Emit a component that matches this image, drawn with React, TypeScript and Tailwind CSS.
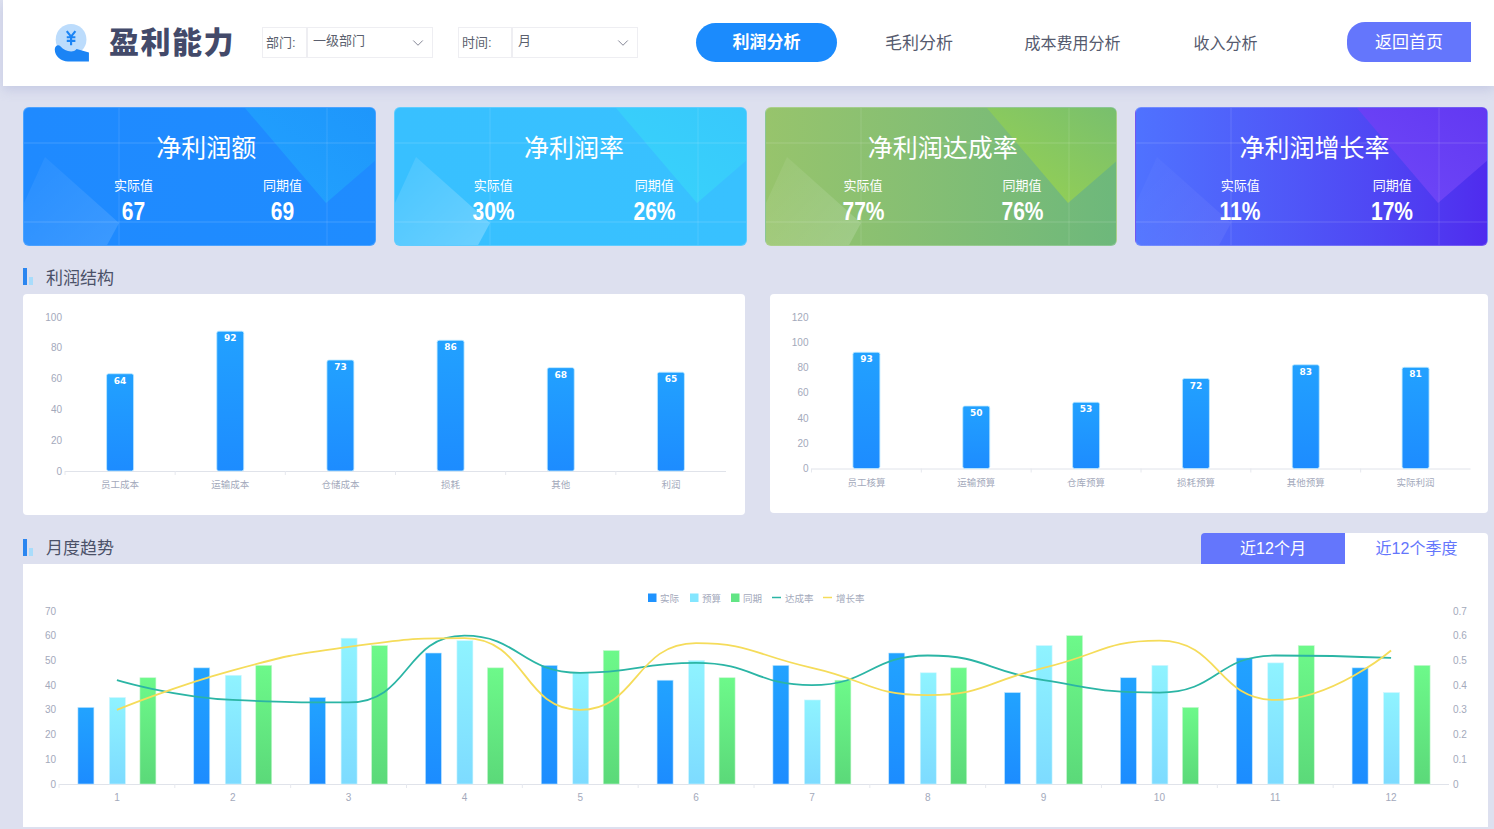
import { ChevronDown } from "lucide-react"

const cards = [
  {
    title: "净利润额", actual: "67", last: "69",
    bg: "bg-gradient-to-r from-[#1f8aff] to-[#1f8cff]", grid: "pl-[35px] grid-cols-[149px_149px]", titlePad: "pl-[14px]",
    tri: "#22a3ff", triEnd: "#1e96fb", shade: 0.1, id: "a",
  },
  {
    title: "净利润率", actual: "30%", last: "26%",
    bg: "bg-gradient-to-r from-[#38c0ff] to-[#38c1ff]", grid: "pl-[18px] grid-cols-[161px_161px]", titlePad: "pl-[8px]",
    tri: "#38d4fa", triEnd: "#38c8fc", shade: 0.2, id: "b",
  },
  {
    title: "净利润达成率", actual: "77%", last: "76%",
    bg: "bg-gradient-to-r from-[#97c46c] to-[#6db87b]", grid: "pl-[18px] grid-cols-[159px_159px]", titlePad: "pl-[4px]",
    tri: "#9ad34f", triEnd: "#78bf6e", shade: 0.13, id: "c",
  },
  {
    title: "净利润增长率", actual: "11%", last: "17%",
    bg: "bg-gradient-to-r from-[#4f72ff] to-[#4f2bee]", grid: "pl-[28px] grid-cols-[152px_152px]", titlePad: "pl-[6px]",
    tri: "#7049f8", triEnd: "#6238f2", shade: 0.05, id: "d",
  },
]

function StatValue({ text }: { text: string }) {
  return (
    <div className="mt-[2px] scale-x-[0.84] text-[25px] font-bold leading-[28px]">{text}</div>
  )
}

function StatCard({ card }: { card: (typeof cards)[number] }) {
  return (
    <div className={`relative h-[139px] overflow-hidden rounded-[6px] border border-white/20 text-white ${card.bg}`}>
      <svg className="absolute inset-0" width="353" height="139">
        <defs>
          <linearGradient id={`tri-${card.id}`} x1="0" y1="1" x2="1" y2="0">
            <stop offset="0" stopColor={card.tri} />
            <stop offset="1" stopColor={card.triEnd} />
          </linearGradient>
          <linearGradient id={`pale-${card.id}`} x1="0" y1="0" x2="1" y2="1">
            <stop offset="0" stopColor="#fff" stopOpacity={card.shade * 0.4} />
            <stop offset="1" stopColor="#fff" stopOpacity={card.shade * 1.3} />
          </linearGradient>
        </defs>
        <polygon points="221,0 353,0 353,51 302,95" fill={`url(#tri-${card.id})`} />
        <polygon points="0,95 21,49 95,115 82,139 0,139" fill={`url(#pale-${card.id})`} />
        <path d="M95 0V139M303 0V139" stroke="#fff" strokeOpacity="0.12" />
        <path d="M0 35H353M0 114H353" stroke="#fff" strokeOpacity="0.16" />
      </svg>
      <div className="relative pt-[23px]">
        <div className={`text-center text-[25px] leading-[34px] ${card.titlePad}`}>{card.title}</div>
        <div className={`mt-[12px] grid text-center ${card.grid}`}>
          <div>
            <div className="text-[13px] leading-[18px]">实际值</div>
            <StatValue text={card.actual} />
          </div>
          <div>
            <div className="text-[13px] leading-[18px]">同期值</div>
            <StatValue text={card.last} />
          </div>
        </div>
      </div>
    </div>
  )
}

function Filter({ label, value, labelW }: { label: string; value: string; labelW: string }) {
  return (
    <div className="flex h-[31px] border border-[#eeeef2] text-[13px] text-[#5b5f6e]">
      <div className={`flex items-center border-r-2 border-[#eeeef2] pl-[3px] ${labelW}`}>{label}</div>
      <div className="flex w-[124px] items-center justify-between pl-[5px] pr-[5px]">
        <span className="-mt-[3px]">{value}</span>
        <ChevronDown className="h-[18px] w-[18px] text-[#77798a]" strokeWidth={1.2} />
      </div>
    </div>
  )
}

function SectionTitle({ text }: { text: string }) {
  return (
    <div className="flex items-center gap-[13px]">
      <div className="flex h-[17px] items-end gap-[2px]">
        <div className="h-[17px] w-[4px] bg-[#2b86f0]" />
        <div className="h-[8px] w-[4px] bg-[#a8dcfb]" />
      </div>
      <span className="pt-[4px] text-[17px] text-[#4b5168]">{text}</span>
    </div>
  )
}

function BarChart({ id, width, height, x0, x1, y0, yTop, barH, max, step, items }: {
  id: string; width: number; height: number; x0: number; x1: number; y0: number; yTop: number
  barH: number; max: number; step: number; items: [string, number][]
}) {
  const band = (x1 - x0) / items.length
  const ticks: number[] = []
  for (let v = 0; v <= max; v += step) ticks.push(v)
  const tickY = (v: number) => y0 - ((y0 - yTop) * v) / max
  const barY = (v: number) => y0 - (barH * v) / max
  return (
    <svg width={width} height={height} className="block">
      <defs>
        <linearGradient id={id} x1="0" y1="0" x2="0" y2="1">
          <stop offset="0" stopColor="#22a1ff" />
          <stop offset="1" stopColor="#1d8cff" />
        </linearGradient>
      </defs>
      {ticks.map((v) => (
        <text key={v} x={x0 - 3} y={tickY(v) + 3.5} textAnchor="end" fontSize="10" fill="#a3a9bb">{v}</text>
      ))}
      <line x1={x0} x2={x1} y1={y0 + 0.5} y2={y0 + 0.5} stroke="#e0e3ea" />
      {items.map((_, i) => (
        <line key={i} x1={x0 + band * i} x2={x0 + band * i} y1={y0} y2={y0 + 4} stroke="#e6e8ee" />
      ))}
      {items.map(([name, v], i) => {
        const c = x0 + band * (i + 0.5)
        return (
          <g key={name}>
            <rect x={c - 13.5} y={barY(v)} width={27} height={y0 - barY(v)} rx={2} fill={`url(#${id})`} stroke="#bfeaff" strokeWidth={0.8} />
            <text x={c} y={barY(v) + 10} textAnchor="middle" fontSize="9" fontWeight="700" fontFamily="'DejaVu Sans', sans-serif" fill="#fff">{v}</text>
            <text x={c} y={y0 + 17} textAnchor="middle" fontSize="9.5" fill="#a3a9bb">{name}</text>
          </g>
        )
      })}
    </svg>
  )
}

// same control points as an echarts smooth line
function smoothPath(pts: [number, number][], smooth = 0.5) {
  const clamp = (v: number, a: number, b: number) => Math.max(Math.min(v, Math.max(a, b)), Math.min(a, b))
  let d = `M${pts[0][0]} ${pts[0][1]}`
  let cpx0 = pts[0][0]
  let cpy0 = pts[0][1]
  for (let i = 1; i < pts.length; i++) {
    const [x, y] = pts[i]
    const [px, py] = pts[i - 1]
    let cpx1 = x
    let cpy1 = y
    let nx0 = x
    let ny0 = y
    if (i < pts.length - 1) {
      const [nx, ny] = pts[i + 1]
      const lenPrev = Math.hypot(x - px, y - py)
      const lenNext = Math.hypot(nx - x, ny - y)
      const ratio = lenNext / (lenNext + lenPrev)
      nx0 = clamp(x + (nx - px) * smooth * ratio, nx, x)
      ny0 = clamp(y + (ny - py) * smooth * ratio, ny, y)
      cpx1 = clamp(x - ((nx0 - x) * lenPrev) / lenNext, px, x)
      cpy1 = clamp(y - ((ny0 - y) * lenPrev) / lenNext, py, y)
      nx0 = x + ((x - cpx1) * lenNext) / lenPrev
      ny0 = y + ((y - cpy1) * lenNext) / lenPrev
    }
    d += `C${cpx0} ${cpy0} ${cpx1} ${cpy1} ${x} ${y}`
    cpx0 = nx0
    cpy0 = ny0
  }
  return d
}

const actual = [31, 47, 35, 53, 48, 42, 48, 53, 37, 43, 51, 47]
const budget = [35, 44, 59, 58, 45, 50, 34, 45, 56, 48, 49, 37]
const lastYear = [43, 48, 56, 47, 54, 43, 42, 47, 60, 31, 56, 48]
const reach = [0.42, 0.34, 0.33, 0.6, 0.45, 0.49, 0.4, 0.52, 0.42, 0.37, 0.52, 0.51]
const growth = [0.3, 0.46, 0.555, 0.59, 0.3, 0.57, 0.47, 0.36, 0.47, 0.58, 0.34, 0.54]

function TrendChart() {
  const x0 = 36
  const x1 = 1426
  const y0 = 220
  const yTop = 47
  const band = (x1 - x0) / 12
  const yOf = (v: number) => y0 - ((y0 - yTop) * v) / 70
  const cx = (i: number) => x0 + band * (i + 0.5)
  const linePts = (arr: number[]) => arr.map((v, i) => [cx(i), yOf(v * 100)] as [number, number])
  const series = [
    { data: actual, off: -31, fill: "url(#t-blue)", stroke: "#bfe6ff" },
    { data: budget, off: 0.5, fill: "url(#t-cyan)", stroke: "#d0f6ff" },
    { data: lastYear, off: 31, fill: "url(#t-green)", stroke: "#c8f7d2" },
  ]
  const ticks = [0, 10, 20, 30, 40, 50, 60, 70]
  return (
    <svg width="1465" height="263" className="block">
      <defs>
        <linearGradient id="t-blue" x1="0" y1="0" x2="0" y2="1">
          <stop offset="0" stopColor="#22a3ff" />
          <stop offset="1" stopColor="#1c8cff" />
        </linearGradient>
        <linearGradient id="t-cyan" x1="0" y1="0" x2="0" y2="1">
          <stop offset="0" stopColor="#8ff3ff" />
          <stop offset="1" stopColor="#7ddbff" />
        </linearGradient>
        <linearGradient id="t-green" x1="0" y1="0" x2="0" y2="1">
          <stop offset="0" stopColor="#6df98a" />
          <stop offset="1" stopColor="#5bd979" />
        </linearGradient>
      </defs>

      <g fontSize="9.5" fill="#a3a9bb">
        <rect x="625" y="29.5" width="8.5" height="8.5" fill="#1f93ff" />
        <text x="637" y="37.5">实际</text>
        <rect x="667" y="29.5" width="8.5" height="8.5" fill="#84e6ff" />
        <text x="679" y="37.5">预算</text>
        <rect x="708" y="29.5" width="8.5" height="8.5" fill="#62e585" />
        <text x="720" y="37.5">同期</text>
        <line x1="749" x2="758" y1="33.5" y2="33.5" stroke="#2bb5a5" strokeWidth="1.5" />
        <text x="762" y="37.5">达成率</text>
        <line x1="800" x2="809" y1="33.5" y2="33.5" stroke="#f5dc5a" strokeWidth="1.5" />
        <text x="813" y="37.5">增长率</text>
      </g>

      {ticks.map((v) => (
        <g key={v} fontSize="10" fill="#a3a9bb">
          <text x={x0 - 3} y={yOf(v) + 3.5} textAnchor="end">{v}</text>
          <text x={x1 + 4} y={yOf(v) + 3.5}>{v === 0 ? "0" : (v / 100).toFixed(1)}</text>
        </g>
      ))}
      <line x1={x0} x2={x1} y1={y0 + 0.5} y2={y0 + 0.5} stroke="#e0e3ea" />
      {actual.map((_, i) => (
        <g key={i}>
          <line x1={x0 + band * i} x2={x0 + band * i} y1={y0} y2={y0 + 4} stroke="#e6e8ee" />
          <text x={cx(i)} y={y0 + 17} textAnchor="middle" fontSize="10" fill="#a3a9bb">{i + 1}</text>
        </g>
      ))}
      {series.map((s) =>
        s.data.map((v, i) => (
          <rect key={i} x={cx(i) + s.off - 8} y={yOf(v)} width={16} height={y0 - yOf(v)} fill={s.fill} stroke={s.stroke} strokeWidth={0.6} />
        )),
      )}
      <path d={smoothPath(linePts(reach))} fill="none" stroke="#2bb5a5" strokeWidth="1.8" />
      <path d={smoothPath(linePts(growth))} fill="none" stroke="#f5dc5a" strokeWidth="1.8" />
    </svg>
  )
}

export default function App() {
  return (
    <div className="h-[829px] overflow-hidden bg-[#dde0ef] pl-[3px] font-['Liberation_Sans','Noto_Sans_CJK_SC',sans-serif]">
      <header className="relative flex h-[86px] items-center bg-white pl-[49px] shadow-[0_4px_10px_rgba(170,178,215,0.45)]">
        <svg width="40" height="40" viewBox="60 35 130 130" className="mr-[17px] mt-[1px] shrink-0">
          <ellipse cx="122" cy="85" rx="50" ry="50" fill="#bcdcfc" />
          <path d="M108 58L122 76L136 58M122 76V104M108 78H136M108 90H136" fill="none" stroke="#1b84f5" strokeWidth="7" />
          <path d="M69 118C69 106 80 100 88 108C96 118 108 124 122 124C130 124 134 122 140 116L180 128V157H112C90 157 69 140 69 118Z" fill="#1b84f5" />
        </svg>
        <div className="w-[153px] shrink-0 text-[30px] font-black leading-none tracking-[1.5px] text-[#434a6a]">盈利能力</div>
        <div className="-mt-[1px] flex gap-[25px]">
          <Filter label="部门:" value="一级部门" labelW="w-[45px]" />
          <Filter label="时间:" value="月" labelW="w-[54px]" />
        </div>
        <nav className="ml-[58px] flex items-center text-[16px] text-[#555a6e]">
          <div className="-mt-[1px] flex h-[39px] w-[141px] items-center justify-center rounded-[20px] bg-[#1b8bfd] text-[17px] font-bold text-white">利润分析</div>
          <div className="mt-[1px] w-[164px] text-center text-[17px]">毛利分析</div>
          <div className="mt-[1px] w-[143px] text-center">成本费用分析</div>
          <div className="mt-[1px] w-[163px] text-center">收入分析</div>
        </nav>
        <div className="-mt-[2px] ml-[40px] flex h-[40px] w-[124px] items-center justify-center rounded-l-[18px] bg-[#6476fc] pt-[2px] text-[17px] text-white">返回首页</div>
      </header>

      <main className="pl-[20px] pr-[6px] pt-[21px]">
        <div className="grid grid-cols-4 gap-[18px]">
          {cards.map((c) => (
            <StatCard key={c.id} card={c} />
          ))}
        </div>

        <div className="flex h-[48px] items-center pt-[13px]">
          <SectionTitle text="利润结构" />
        </div>
        <div className="flex items-start gap-[25px]">
          <div className="h-[221px] w-[722px] overflow-hidden rounded-[4px] bg-white">
            <BarChart id="bar-l" width={722} height={221} x0={42} x1={703} y0={177} yTop={23} barH={152} max={100} step={20}
              items={[["员工成本", 64], ["运输成本", 92], ["仓储成本", 73], ["损耗", 86], ["其他", 68], ["利润", 65]]} />
          </div>
          <div className="h-[219px] w-[718px] overflow-hidden rounded-[4px] bg-white">
            <BarChart id="bar-r" width={718} height={219} x0={41.5} x1={700.5} y0={174.5} yTop={23} barH={150} max={120} step={20}
              items={[["员工核算", 93], ["运输预算", 50], ["仓库预算", 53], ["损耗预算", 72], ["其他预算", 83], ["实际利润", 81]]} />
          </div>
        </div>

        <div className="mt-[18px] flex h-[31px] items-center justify-between">
          <div className="-mt-[3px]">
            <SectionTitle text="月度趋势" />
          </div>
          <div className="flex h-[31px] text-[16px]">
            <div className="flex w-[144px] items-center justify-center rounded-tl-[4px] bg-[#6476fc] pt-[1px] text-white">近12个月</div>
            <div className="flex w-[143px] items-center justify-center rounded-tr-[4px] bg-white pt-[1px] text-[#6476fc]">近12个季度</div>
          </div>
        </div>
        <div className="h-[263px] bg-white">
          <TrendChart />
        </div>
      </main>
    </div>
  )
}
